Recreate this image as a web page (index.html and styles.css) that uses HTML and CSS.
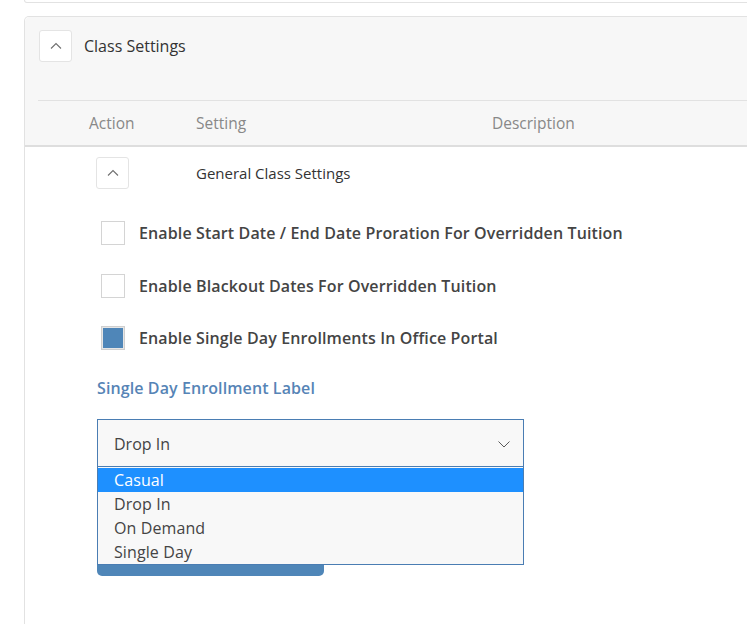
FILE: index.html
```
<!DOCTYPE html>
<html lang="en">
<head>
    <meta charset="UTF-8">
    <meta name="viewport" content="width=device-width, initial-scale=1.0">
    <title>Class Settings</title>
    <link rel="stylesheet" href="styles.css">
</head>
<body>
    <div class="page">
        <div class="prev-card"></div>

        <div class="card">
            <div class="card-head">
                <div class="head-row">
                    <button class="toggle" aria-label="Collapse">
                        <svg width="12" height="7" viewBox="0 0 12 7"><path d="M1 6.5 L6 1.5 L11 6.5" fill="none" stroke="#6f6f6f" stroke-width="1.1"/></svg>
                    </button>
                    <span class="card-title">Class Settings</span>
                </div>
            </div>

            <div class="table-head">
                <span>Action</span>
                <span>Setting</span>
                <span>Description</span>
            </div>

            <div class="card-body">
                <div class="group-row">
                    <button class="toggle small" aria-label="Collapse group">
                        <svg width="12" height="7" viewBox="0 0 12 7"><path d="M1 6.5 L6 1.5 L11 6.5" fill="none" stroke="#6f6f6f" stroke-width="1.1"/></svg>
                    </button>
                    <span class="group-title">General Class Settings</span>
                </div>

                <div class="settings">
                    <label class="check-row">
                        <span class="box"></span>
                        <span>Enable Start Date / End Date Proration For Overridden Tuition</span>
                    </label>
                    <label class="check-row">
                        <span class="box"></span>
                        <span>Enable Blackout Dates For Overridden Tuition</span>
                    </label>
                    <label class="check-row">
                        <span class="box checked"></span>
                        <span>Enable Single Day Enrollments In Office Portal</span>
                    </label>

                    <div class="field-label">Single Day Enrollment Label</div>

                    <div class="select-wrap">
                        <div class="select">
                            <span>Drop In</span>
                            <svg width="12" height="7" viewBox="0 0 12 7"><path d="M0.5 0.5 L6 6 L11.5 0.5" fill="none" stroke="#5a5a5a" stroke-width="1"/></svg>
                        </div>
                        <ul class="options">
                            <li class="active">Casual</li>
                            <li>Drop In</li>
                            <li>On Demand</li>
                            <li>Single Day</li>
                        </ul>
                    </div>

                    <button class="save" aria-label="Save settings"></button>
                </div>
            </div>
        </div>
    </div>
</body>
</html>
```
FILE: styles.css
```
html, body {
    margin: 0;
    overflow: hidden;
}
body {
    font-family: "Open Sans", Arial, sans-serif;
    background: #fff;
    color: #333;
}
.page {
    padding-left: 24px;
    margin-right: -20px;
}
.prev-card {
    height: 2px;
    border: 1px solid #e2e2e2;
    border-top: none;
    border-radius: 0 0 0 5px;
}
.card {
    margin-top: 13px;
    border: 1px solid #e2e2e2;
    border-bottom: none;
    border-radius: 5px 0 0 0;
    height: 620px;
}
.card-head {
    background: #f7f7f7;
    padding: 13px 0 0 13px;
    border-radius: 5px 0 0 0;
}
.head-row {
    display: flex;
    align-items: center;
    gap: 12px;
    padding: 0 0 38px 1px;
    border-bottom: 1px solid #e2e2e2;
}
.toggle {
    width: 33px;
    height: 32px;
    padding: 0;
    background: #fff;
    border: 1px solid #e4e4e4;
    border-radius: 3px;
    display: flex;
    align-items: center;
    justify-content: center;
}
.toggle svg {
    margin-top: -2px;
}
.card-title {
    font-size: 16px;
    color: #333;
}
.table-head {
    display: grid;
    grid-template-columns: 107px 296px 1fr;
    align-items: center;
    height: 44px;
    padding-left: 64px;
    background: #f7f7f7;
    border-bottom: 2px solid #dedede;
    font-size: 15.5px;
    color: #888;
}
.card-body {
    background: #fff;
    padding-top: 10px;
}
.group-row {
    display: grid;
    grid-template-columns: 100px 1fr;
    align-items: center;
    padding-left: 71px;
}
.group-title {
    font-size: 15px;
    color: #333;
}
.settings {
    padding: 32px 0 0 72px;
}
.check-row {
    display: flex;
    align-items: center;
    gap: 14px;
    margin-left: 4px;
    margin-bottom: 28.5px;
    font-size: 16px;
    font-weight: 600;
    letter-spacing: 0.12px;
    color: #444;
}
.box {
    width: 22px;
    height: 22px;
    border: 1px solid #d4d4d4;
    background: #fff;
    flex-shrink: 0;
}
.box.checked {
    background: #4f86b8;
    box-shadow: inset 0 0 0 1px #e6e6e6;
    border-color: #cfcfcf;
}
.field-label {
    margin-top: -2px;
    font-size: 16px;
    font-weight: 600;
    letter-spacing: 0.1px;
    color: #5684b6;
}
.select-wrap {
    position: relative;
    width: 427px;
    margin-top: 20px;
}
.select {
    display: flex;
    align-items: center;
    justify-content: space-between;
    height: 48px;
    box-sizing: border-box;
    padding: 3px 13px 0 16px;
    border: 1px solid #4a7db3;
    background: #f8f8f8;
    font-size: 16px;
    color: #444;
}
.options {
    position: absolute;
    top: 48px;
    left: 0;
    right: 0;
    margin: 0;
    padding: 1px 0 0;
    list-style: none;
    background: #f8f8f8;
    border: 1px solid #4a7db3;
    border-top: none;
    font-size: 16px;
    letter-spacing: 0.1px;
    color: #444;
    z-index: 2;
}
.options li {
    height: 24px;
    line-height: 25px;
    padding-left: 16px;
}
.options li.active {
    background: #1e90ff;
    color: #fff;
}
.save {
    display: block;
    width: 227px;
    height: 40px;
    margin-top: 69px;
    border: none;
    border-radius: 5px;
    background: #4f86b8;
}
```
